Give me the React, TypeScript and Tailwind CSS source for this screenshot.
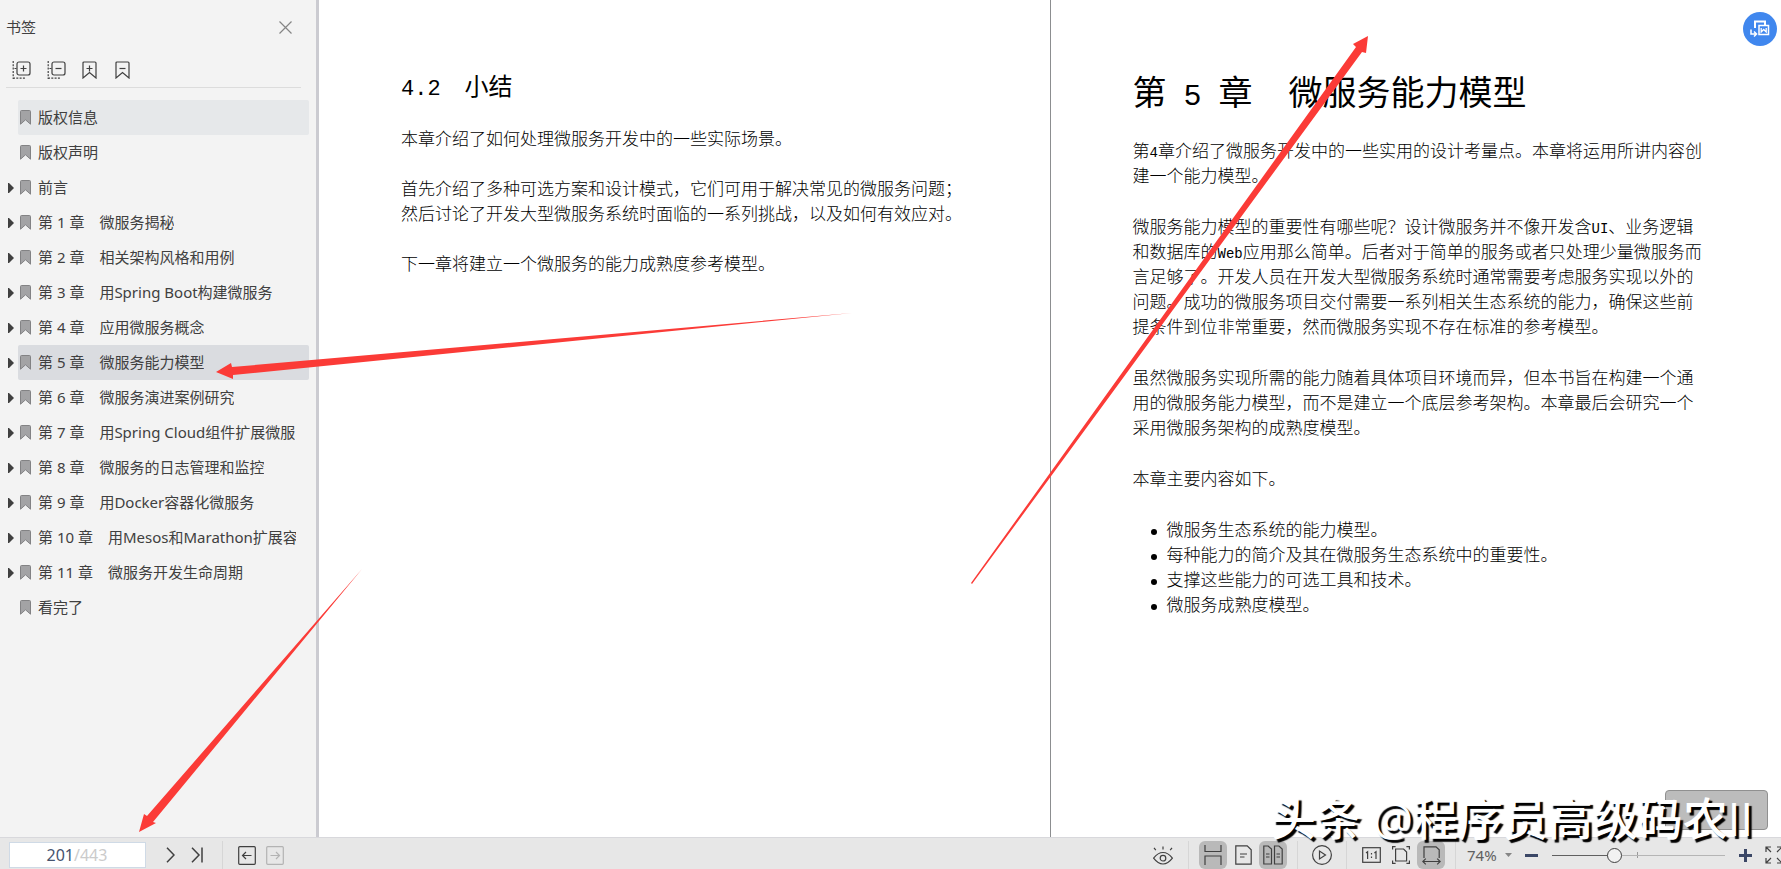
import { useState } from "react";
import type { ReactNode } from "react";
import { clsx } from "clsx";

type Chapter = {
  id: string;
  title: string;
  expandable: boolean;
};

const CHAPTERS: Chapter[] = [
  { id: "copyright", title: "版权信息", expandable: false },
  { id: "notice", title: "版权声明", expandable: false },
  { id: "preface", title: "前言", expandable: true },
  { id: "ch1", title: "第 1 章　微服务揭秘", expandable: true },
  { id: "ch2", title: "第 2 章　相关架构风格和用例", expandable: true },
  { id: "ch3", title: "第 3 章　用Spring Boot构建微服务", expandable: true },
  { id: "ch4", title: "第 4 章　应用微服务概念", expandable: true },
  { id: "ch5", title: "第 5 章　微服务能力模型", expandable: true },
  { id: "ch6", title: "第 6 章　微服务演进案例研究", expandable: true },
  { id: "ch7", title: "第 7 章　用Spring Cloud组件扩展微服", expandable: true },
  { id: "ch8", title: "第 8 章　微服务的日志管理和监控", expandable: true },
  { id: "ch9", title: "第 9 章　用Docker容器化微服务", expandable: true },
  { id: "ch10", title: "第 10 章　用Mesos和Marathon扩展容", expandable: true },
  { id: "ch11", title: "第 11 章　微服务开发生命周期", expandable: true },
  { id: "end", title: "看完了", expandable: false },
];

const HOVERED = "copyright";

function Icon({
  width,
  height,
  className,
  children,
}: {
  width: number;
  height: number;
  className?: string;
  children: ReactNode;
}) {
  return (
    <svg
      width={width}
      height={height}
      viewBox={`0 0 ${width} ${height}`}
      fill="none"
      stroke="currentColor"
      strokeWidth="1.2"
      className={clsx("block shrink-0", className)}
      aria-hidden="true"
    >
      {children}
    </svg>
  );
}

function ExpandIcon({ minus }: { minus?: boolean }) {
  return (
    <Icon width={19} height={18}>
      <rect x="5" y="1" width="13" height="13" rx="2" />
      <path d={minus ? "M8.5 7.5h6" : "M8.5 7.5h6M11.5 4.5v6"} />
      <path d="M1.2 0v18M2.5 7.5H5M1 17.2h13" strokeDasharray="2 1.3" />
    </Icon>
  );
}

function BookmarkToolIcon({ minus }: { minus?: boolean }) {
  return (
    <Icon width={15} height={18}>
      <path d="M1 17V2q0-1 1-1h11q1 0 1 1v15l-6.5-5.5z" />
      <path d={minus ? "M4.5 7.5h6" : "M4.5 7.5h6M7.5 4.5v6"} />
    </Icon>
  );
}

function Sidebar() {
  const [selected, setSelected] = useState("ch5");

  return (
    <aside className="flex w-[319px] shrink-0 flex-col overflow-hidden border-r-3 border-[#cbcbd1] bg-[#f3f3f3] text-[15px] text-[#404040]">
      <div className="flex h-[54px] items-center justify-between pr-6 pl-1.5">
        <h2>书签</h2>
        <button type="button" aria-label="关闭书签" className="text-[#858585]">
          <Icon width={13} height={13}>
            <path d="M.5.5l12 12M12.5.5l-12 12" />
          </Icon>
        </button>
      </div>

      <div className="mr-[15px] ml-1.5 flex h-[34px] items-center gap-4 border-b border-[#dcdcdc] pb-0.5 pl-1.5">
        <button type="button" aria-label="全部展开">
          <ExpandIcon />
        </button>
        <button type="button" aria-label="全部收起">
          <ExpandIcon minus />
        </button>
        <button type="button" aria-label="添加书签">
          <BookmarkToolIcon />
        </button>
        <button type="button" aria-label="删除书签" className="ml-0.5">
          <BookmarkToolIcon minus />
        </button>
      </div>

      <ul className="mt-3 pr-[7px]">
        {CHAPTERS.map((chapter) => (
          <li key={chapter.id} className="flex h-[35px] items-center">
            <span className="flex w-[18px] shrink-0 justify-center pl-1">
              {chapter.expandable ? (
                <svg width="6" height="10" viewBox="0 0 6 10" aria-hidden="true">
                  <path d="M0 0h1l5 5-5 5H0z" fill="#404040" />
                </svg>
              ) : null}
            </span>
            <button
              type="button"
              onClick={() => setSelected(chapter.id)}
              className={clsx(
                "flex h-full min-w-0 flex-1 items-center gap-[7px] rounded-xs pr-[13px] pl-0.5 text-left",
                chapter.id === selected && "bg-[#dadce0]",
                chapter.id === HOVERED && chapter.id !== selected && "bg-[#e6e8ea]"
              )}
            >
              <svg width="11" height="15" viewBox="0 0 11 15" className="shrink-0" aria-hidden="true">
                <path d="M.5 14.2V1.5q0-1 1-1h8q1 0 1 1v12.7l-5-4.4z" fill="#a3a3a5" stroke="#828284" />
              </svg>
              <span className="overflow-hidden whitespace-nowrap">{chapter.title}</span>
            </button>
          </li>
        ))}
      </ul>
    </aside>
  );
}

// Latin runs are set smaller so each letter takes half a Han character
function Latin({ children }: { children: ReactNode }) {
  return <span className="font-['Liberation_Mono',monospace] text-sm leading-none">{children}</span>;
}

function Reader() {
  return (
    <main className="flex min-w-0 flex-1 bg-white font-['Liberation_Serif','Noto_Sans_CJK_SC',serif] text-[17px] leading-[25px] font-light whitespace-nowrap text-black">
      <article className="min-w-0 flex-1 overflow-hidden border-r border-[#8c8e90] pt-[71px] pl-[82px]">
        <h2 className="flex h-8 items-baseline gap-6 text-[24px] leading-8 font-normal">
          <span className="font-['Liberation_Mono',monospace] text-[22px]">4.2</span>
          <span>小结</span>
        </h2>
        <div className="mt-6 flex flex-col gap-[25px]">
          <p>本章介绍了如何处理微服务开发中的一些实际场景。</p>
          <p>
            首先介绍了多种可选方案和设计模式，它们可用于解决常见的微服务问题；
            <br />
            然后讨论了开发大型微服务系统时面临的一系列挑战，以及如何有效应对。
          </p>
          <p>下一章将建立一个微服务的能力成熟度参考模型。</p>
        </div>
      </article>

      <article className="min-w-0 flex-1 overflow-hidden pt-[73px] pl-[82px]">
        <h1 className="flex h-[42px] gap-9 text-[34px] leading-[42px] font-normal">
          <span className="flex items-baseline gap-[17px]">
            <span>第</span>
            <span className="font-['Liberation_Mono',monospace] text-[30px]">5</span>
            <span>章</span>
          </span>
          <span>微服务能力模型</span>
        </h1>
        <div className="mt-6 flex flex-col gap-[26px]">
          <p>
            第<Latin>4</Latin>章介绍了微服务开发中的一些实用的设计考量点。本章将运用所讲内容创
            <br />
            建一个能力模型。
          </p>
          <p>
            微服务能力模型的重要性有哪些呢？设计微服务并不像开发含<Latin>UI</Latin>、业务逻辑
            <br />
            和数据库的<Latin>Web</Latin>应用那么简单。后者对于简单的服务或者只处理少量微服务而
            <br />
            言足够了。开发人员在开发大型微服务系统时通常需要考虑服务实现以外的
            <br />
            问题。成功的微服务项目交付需要一系列相关生态系统的能力，确保这些前
            <br />
            提条件到位非常重要，然而微服务实现不存在标准的参考模型。
          </p>
          <p>
            虽然微服务实现所需的能力随着具体项目环境而异，但本书旨在构建一个通
            <br />
            用的微服务能力模型，而不是建立一个底层参考架构。本章最后会研究一个
            <br />
            采用微服务架构的成熟度模型。
          </p>
          <p>本章主要内容如下。</p>
          <ul>
            {[
              "微服务生态系统的能力模型。",
              "每种能力的简介及其在微服务生态系统中的重要性。",
              "支撑这些能力的可选工具和技术。",
              "微服务成熟度模型。",
            ].map((item) => (
              <li key={item} className="flex items-center gap-2.5 pl-[18px]">
                <span className="mt-0.5 size-1.5 rounded-full bg-black" />
                {item}
              </li>
            ))}
          </ul>
        </div>
      </article>
    </main>
  );
}

function Divider() {
  return <span className="h-full w-px shrink-0 bg-[#d6d6d6]" />;
}

function ToolButton({ label, active, children }: { label: string; active?: boolean; children: ReactNode }) {
  return (
    <button
      type="button"
      aria-label={label}
      aria-pressed={active}
      className={clsx("flex size-7 shrink-0 items-center justify-center rounded-md", active && "bg-[#b9b9b9]")}
    >
      {children}
    </button>
  );
}

function StatusBar() {
  const [page, setPage] = useState("201");
  const [zoom, setZoom] = useState(35);

  return (
    <footer className="flex h-8 shrink-0 items-center overflow-hidden border-t border-[#d8d8dc] bg-[#e7e7e7] pt-[3px] text-[#404040]">
      <label className="ml-[9px] flex h-[26px] w-[137px] shrink-0 items-center border border-[#cfdae6] bg-white text-base">
        <input
          aria-label="页码"
          value={page}
          onChange={(e) => setPage(e.target.value)}
          className="w-16 bg-transparent text-right text-[#46536e] outline-none"
        />
        <span className="text-[#cbcbcb]">/443</span>
      </label>
      <button type="button" aria-label="下一页" className="ml-5">
        <Icon width={9} height={16}>
          <path d="M1 .8L8 8l-7 7.2" strokeWidth="1.5" />
        </Icon>
      </button>
      <button type="button" aria-label="最后一页" className="ml-4">
        <Icon width={12} height={16}>
          <path d="M1 .8L8 8l-7 7.2M11 .5v15" strokeWidth="1.5" />
        </Icon>
      </button>
      <span className="ml-[19px] flex h-full items-center gap-[15px]">
        <Divider />
        <button type="button" aria-label="后退">
          <Icon width={18} height={19}>
            <rect x=".7" y=".7" width="16.6" height="17.6" rx="1" />
            <path d="M4.5 9.5h9M8 6L4.5 9.5 8 13" />
          </Icon>
        </button>
        <button type="button" aria-label="前进" className="-ml-[5px] text-[#b3b3b3]">
          <Icon width={18} height={19}>
            <rect x=".7" y=".7" width="16.6" height="17.6" rx="1" />
            <path d="M4.5 9.5h9M10 6l3.5 3.5L10 13" />
          </Icon>
        </button>
      </span>

      <div className="-mr-0.5 ml-auto flex h-full shrink-0 items-center">
        <ToolButton label="护眼模式">
          <Icon width={20} height={19}>
            <path d="M.6 12.2Q5 6.5 10 6.5t9.4 5.7Q15 18 10 18T.6 12.2z" />
            <circle cx="10" cy="12.2" r="2.8" />
            <path d="M10 .5v3M1 1.8l1.8 2.4M19 1.8l-1.8 2.4" />
          </Icon>
        </ToolButton>
        <span className="ml-[11px] flex h-full items-center gap-2.5">
          <Divider />
          <span className="flex items-center gap-0.5">
            <ToolButton label="连续阅读" active>
              <Icon width={18} height={20}>
                <path d="M1 0v6.5h16V0M1 20v-9h16v9" />
              </Icon>
            </ToolButton>
            <ToolButton label="单页">
              <Icon width={17} height={20}>
                <path d="M.8.8h11.4l4 4v14.4H.8z" />
                <path d="M5 9h7M5 12h4.5" />
              </Icon>
            </ToolButton>
            <ToolButton label="双页" active>
              <Icon width={20} height={20}>
                <path d="M.8 1h4.4l3.3 3v15H.8zM11.5 1h4.4l3.3 3v15h-7.7z" />
                <path d="M3 9h3.5M3 12h3.5M13.5 9H17M13.5 12H17" />
              </Icon>
            </ToolButton>
          </span>
          <Divider />
          <ToolButton label="播放">
            <Icon width={20} height={20}>
              <circle cx="10" cy="10" r="9.4" />
              <path d="M7.5 6v8l6-4z" />
            </Icon>
          </ToolButton>
          <Divider />
          <span className="flex items-center gap-0.5">
            <ToolButton label="实际大小">
              <Icon width={19} height={16}>
                <rect x=".7" y=".7" width="17.6" height="14.6" />
                <path d="M4 6l1.6-1.2V12M12.4 6L14 4.8V12M9.5 6v1.4M9.5 9.6V11" />
              </Icon>
            </ToolButton>
            <ToolButton label="适合页面">
              <Icon width={18} height={18}>
                <path d="M3.6 3h8l3 3v9h-11z" />
                <path d="M.6 3.5V.6h3M14.4.6h3v2.9M.6 14.5v2.9h3M14.4 17.4h3v-2.9" />
              </Icon>
            </ToolButton>
            <ToolButton label="适合宽度" active>
              <Icon width={19} height={19}>
                <path d="M2 12V.8h12l3.2 3V12M.8 15.5h17.4M3.8 12.6L.8 15.5l3 2.9M15.2 12.6l3 2.9-3 2.9" />
              </Icon>
            </ToolButton>
          </span>
          <Divider />
        </span>
        <button type="button" className="ml-[11px] flex w-[45px] items-center justify-between text-[15px] text-[#606060]">
          74%
          <svg width="7" height="4" viewBox="0 0 7 4" aria-hidden="true">
            <path d="M0 0h7L3.500 4z" fill="#858585" />
          </svg>
        </button>
        <button type="button" aria-label="缩小" className="ml-[13px] text-[#3b4766]">
          <Icon width={13} height={13}>
            <path d="M0 6.500h13" strokeWidth="3" />
          </Icon>
        </button>
        <span className="relative ml-3.5 flex h-4 w-[173px] items-center">
          <span className="absolute left-[85px] h-1.5 w-px bg-[#9a9a9a]" />
          <input
            type="range"
            aria-label="缩放"
            value={zoom}
            onChange={(e) => setZoom(Number(e.target.value))}
            className="relative h-4 w-full appearance-none bg-transparent bg-[linear-gradient(to_right,#606060_37%,#b5b5b5_37%)] bg-[length:100%_1px] bg-center bg-no-repeat [&::-webkit-slider-thumb]:size-[15px] [&::-webkit-slider-thumb]:appearance-none [&::-webkit-slider-thumb]:rounded-full [&::-webkit-slider-thumb]:border [&::-webkit-slider-thumb]:border-[#404040] [&::-webkit-slider-thumb]:bg-[#f2f2f2]"
          />
        </span>
        <button type="button" aria-label="放大" className="ml-3.5 text-[#3b4766]">
          <Icon width={13} height={13}>
            <path d="M0 6.500h13M6.500 0v13" strokeWidth="3" />
          </Icon>
        </button>
        <button type="button" aria-label="全屏" className="ml-[13px]">
          <Icon width={18} height={18}>
            <path d="M1 6V1h5M1 1l5 5M12 1h5v5M17 1l-5 5M1 12v5h5M1 17l5-5M17 12v5h-5M17 17l-5-5" />
          </Icon>
        </button>
      </div>
    </footer>
  );
}

// Red annotation arrows drawn freely over the reader
function Annotations() {
  return (
    <svg className="pointer-events-none absolute inset-0 h-full w-full" fill="#fb3b37" aria-hidden="true">
      <path d="M216 372L231 363L232 367L852 313L233 375L233 379z" />
      <path d="M139 832L144 814L147 816L362 569L153 822L156 823z" />
      <path d="M1368 36L1353 44L1356 47L971 583L972 584L1362 52L1366 53z" />
    </svg>
  );
}

export default function App() {
  return (
    <div className="relative flex h-screen flex-col overflow-hidden font-['Noto_Sans','Noto_Sans_CJK_SC',sans-serif]">
      <div className="flex min-h-0 flex-1">
        <Sidebar />
        <Reader />
      </div>
      <StatusBar />

      <button
        type="button"
        aria-label="转换为Word"
        className="absolute top-3 right-1 flex size-[34px] items-center justify-center rounded-full bg-[#4087ee] text-white"
      >
        <Icon width={20} height={18}>
          <path d="M5 8V1.500h10V5" strokeWidth="2" />
          <path d="M9 5.500h9.500v9H9z" strokeWidth="1.500" />
          <path d="M11.200 8v4l2.500-2.500 2.500 2.500V8" strokeWidth="1.300" />
          <path d="M1 9.500V14h5M4 11.500L6.500 14 4 16.500" strokeWidth="1.500" />
        </Icon>
      </button>

      <div className="absolute right-[13px] bottom-[39px] h-10 w-[103px] rounded border border-[#909090] bg-[#bcbcbc]" />
      <div className="pointer-events-none absolute right-7 bottom-[22px] font-['Open_Sans','Noto_Sans_CJK_SC',sans-serif] text-[45px] leading-[56px] font-medium whitespace-nowrap text-white [text-shadow:3px_3px_1px_#000]">
        头条 @程序员高级码农II
      </div>
      <Annotations />
    </div>
  );
}
